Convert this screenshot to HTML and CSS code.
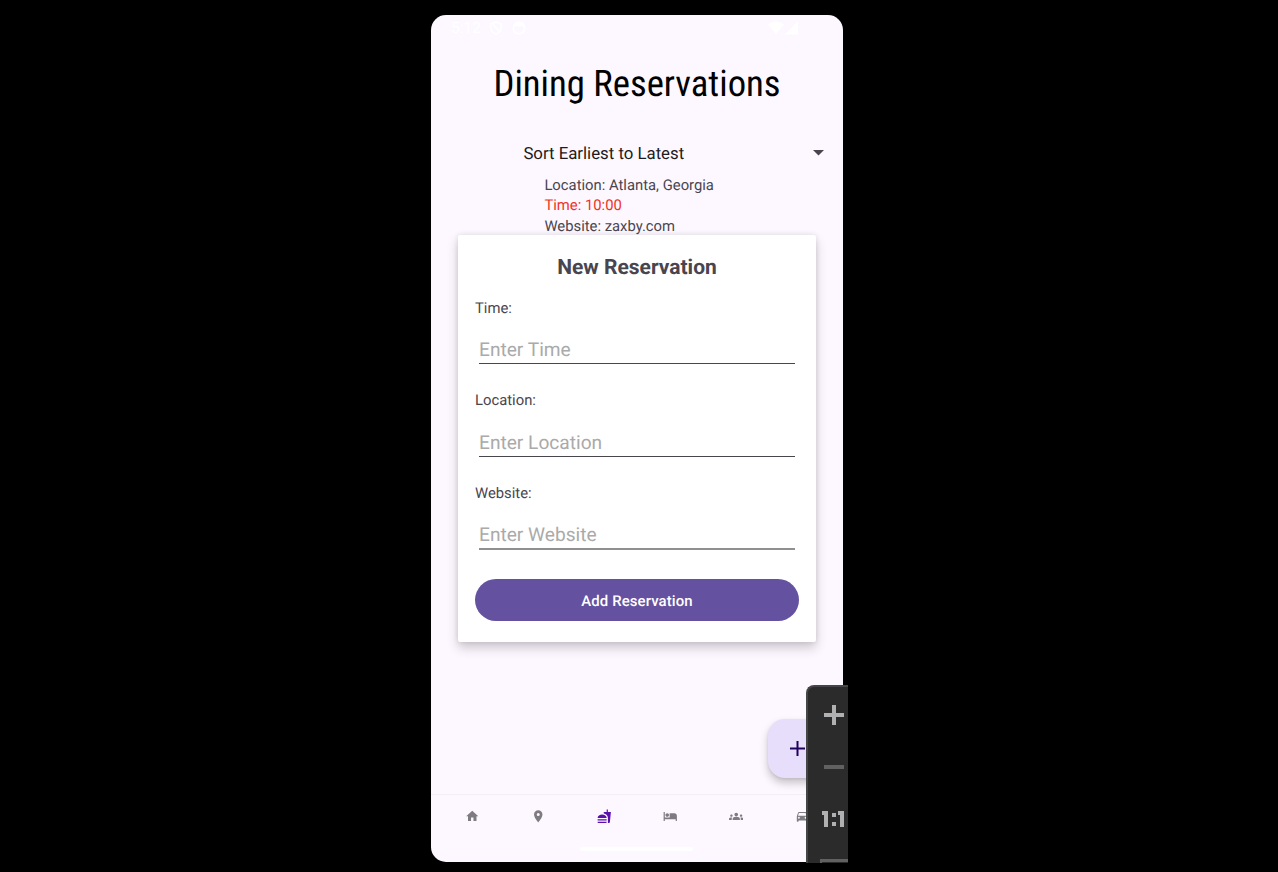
FILE: index.html
```html
<!DOCTYPE html>
<html lang="en">
<head>
<meta charset="utf-8">
<title>Dining Reservations</title>
<link rel="stylesheet" href="styles.css">
</head>
<body>
<div class="stage">
<main class="phone">
  <div class="status">
    <span class="clock">5:12</span>
    <svg class="shield" width="12" height="14" viewBox="0 0 12 14" fill="none" stroke="#fff" stroke-width="1.5"><path d="M6 1 11 2.8V7c0 3-2 5-5 6-3-1-5-3-5-6V2.800z"/><path d="M3 3.500 9 10"/></svg>
    <svg class="face" width="14" height="14" viewBox="0 0 14 14"><circle cx="7" cy="7" r="5.800" fill="none" stroke="#fff" stroke-width="1.600"/><path d="M2 6V3l3-2h5l2 2v3L9 5 7 6 5 5z" fill="#fff"/></svg>
    <svg class="signal" width="31" height="14" viewBox="0 0 31 14" fill="#fff"><path d="M0 3.500Q8-2.500 16 3.500L8 13zM30 0v13.500H17z"/></svg>
  </div>
  <h1 class="title">Dining Reservations</h1>
  <div class="sort"><span class="sort-label">Sort Earliest to Latest</span><svg width="11" height="6" viewBox="0 0 11 6"><path d="M0 0h11L5.500 5.500z" fill="#49454f"/></svg></div>
  <div class="entry">
    <div class="line place">Location: Atlanta, Georgia</div>
    <div class="line late">Time: 10:00</div>
    <div class="line">Website: zaxby.com</div>
  </div>
  <nav class="nav">
    <svg class="tab" viewBox="0 0 24 24"><path d="M10 20v-6h4v6h5v-8h3L12 3 2 12h3v8z"/></svg>
    <svg class="tab" viewBox="0 0 24 24"><path d="M12 2C8.130 2 5 5.130 5 9c0 5.250 7 13 7 13s7-7.750 7-13c0-3.870-3.130-7-7-7zm0 9.500a2.500 2.500 0 0 1 0-5 2.500 2.500 0 0 1 0 5z"/></svg>
    <svg class="tab active" viewBox="0 0 24 24"><path d="M18.060 22.990h1.660c.84 0 1.530-.64 1.630-1.460L23 5.050h-5V1h-1.970v4.050h-4.970l.3 2.340c1.710.47 3.310 1.320 4.270 2.260 1.440 1.420 2.430 2.890 2.430 5.290v8.050zM1 21.990V21h15.030v.99c0 .55-.45 1-1.010 1H2.010c-.56 0-1.010-.45-1.010-1zm15.030-7c0-8-15.030-8-15.030 0h15.030zM1.020 17h15v2h-15z"/></svg>
    <svg class="tab" viewBox="0 0 24 24"><path d="M7 13c1.660 0 3-1.340 3-3S8.660 7 7 7s-3 1.340-3 3 1.340 3 3 3zm12-6h-8v7H3V5H1v15h2v-3h18v3h2v-9c0-2.210-1.790-4-4-4z"/></svg>
    <svg class="tab" viewBox="0 0 24 24"><path d="M12 12.750c1.630 0 3.070.39 4.240.9 1.080.48 1.760 1.560 1.760 2.730V18H6v-1.610c0-1.180.68-2.260 1.760-2.730 1.170-.52 2.610-.91 4.240-.91zM4 13c1.100 0 2-.9 2-2s-.9-2-2-2-2 .9-2 2 .9 2 2 2zm1.130 1.100C4.760 14.040 4.390 14 4 14c-.99 0-1.930.21-2.780.58C.48 14.900 0 15.620 0 16.430V18h4.500v-1.610c0-.83.23-1.610.63-2.290zM20 13c1.100 0 2-.9 2-2s-.9-2-2-2-2 .9-2 2 .9 2 2 2zm4 3.430c0-.81-.48-1.530-1.220-1.850-.85-.37-1.790-.58-2.780-.58-.39 0-.76.040-1.130.1.400.68.630 1.460.630 2.290V18H24v-1.570zM12 6c1.660 0 3 1.340 3 3s-1.340 3-3 3-3-1.340-3-3 1.340-3 3-3z"/></svg>
    <svg class="tab" viewBox="0 0 24 24"><path d="M18.920 6.010C18.720 5.420 18.160 5 17.500 5h-11c-.66 0-1.210.42-1.420 1.010L3 12v8c0 .55.45 1 1 1h1c.55 0 1-.45 1-1v-1h12v1c0 .55.45 1 1 1h1c.55 0 1-.45 1-1v-8zM6.500 16a1.500 1.500 0 1 1 0-3 1.500 1.500 0 0 1 0 3zm11 0a1.500 1.500 0 1 1 0-3 1.500 1.500 0 0 1 0 3zM5 11l1.500-4.500h11L19 11z"/></svg>
  </nav>
  <div class="home-bar"></div>

  <section class="dialog">
    <h2 class="heading">New Reservation</h2>
    <div class="field"><div class="label">Time:</div><div class="input"><span>Enter Time</span></div></div>
    <div class="field"><div class="label">Location:</div><div class="input"><span>Enter Location</span></div></div>
    <div class="field"><div class="label">Website:</div><div class="input soft"><span>Enter Website</span></div></div>
    <div class="button">Add Reservation</div>
  </section>
  <div class="fab"><svg width="15" height="15" viewBox="0 0 15 15"><path d="M7.500 0v15M0 7.500h15" stroke="#21005d" stroke-width="2"/></svg></div>
</main>
<aside class="zoom-panel">
  <svg width="42" height="178" viewBox="0 0 42 178">
    <path d="M18 28h20v4H18zM26 20h4v20h-4z" fill="#b0b1b3"/>
    <path d="M18 80h20v4H18z" fill="#616161"/>
    <path d="M16 126h6v16h-4v-12h-2zM32 126h6v16h-4v-12h-2zM26 128h4v4h-4zM26 137h4v4h-4z" fill="#b0b1b3"/>
    <path d="M14 174h28v3H16v1h-2z" fill="#616161"/>
  </svg>
</aside>
</div>
</body>
</html>
```
FILE: styles.css
```css
body { margin: 0; background: #000; font-family: Roboto, "Liberation Sans", sans-serif; text-rendering: geometricPrecision; }
.stage { position: relative; width: 1278px; height: 872px; overflow: hidden; box-sizing: border-box; padding-top: 15px; }
.phone { position: relative; width: 412px; height: 847px; margin-left: 431px; border-radius: 15px; background: #fdf8ff; overflow: hidden; display: flex; flex-direction: column; color: #49454f; }
.status { height: 24px; flex: none; display: flex; align-items: center; padding: 2px 44px 0 20px; box-sizing: border-box; }
.clock { font-size: 15.5px; line-height: 20px; color: #fff; width: 40px; }
.shield { margin-left: -1px; }
.face { margin-left: 10px; }
.signal { margin-left: auto; }
.title { margin: 19px 0 0; height: 52px; line-height: 52px; text-align: center; font-family: "Roboto Condensed", Roboto, sans-serif; font-stretch: 75%; font-size: 36.700px; font-weight: 400; color: #000; white-space: nowrap; }
.sort { margin-top: 31px; height: 24px; padding: 0 19.500px 0 92.400px; display: flex; align-items: center; justify-content: space-between; color: #1d1b20; }
.sort-label { font-size: 16.800px; line-height: 26px; padding-top: 2px; }
.entry { padding: 10px 0 0 113.400px; }
.line { font-size: 14.820px; line-height: 20.300px; white-space: nowrap; }
.late { color: #f03226; }
.nav { margin-top: auto; height: 55px; border-top: 1px solid #f3eef5; display: grid; grid-template-columns: repeat(6, 66px); padding: 0 7.800px; justify-items: center; box-sizing: border-box; }
.tab { width: 14.500px; height: 14.500px; margin-top: 13.500px; fill: #7e7c80; }
.active { fill: #5b0fad; }
.home-bar { width: 113px; height: 4px; border-radius: 2px; background: #fff; margin: -2px auto 11px; position: relative; left: -1px; }
.dialog { position: absolute; left: 27px; top: 220px; width: 358px; height: 407px; box-sizing: border-box; padding: 16px 17px 21px; background: #fff; border-radius: 2px; box-shadow: 0 6px 11px rgba(50,40,50,.23), 0 0 5px rgba(50,40,50,.12); display: flex; flex-direction: column; }
.heading { margin: 0; padding-top: 1px; height: 31px; text-align: center; font-size: 21px; line-height: 32px; font-weight: 700; }
.field { height: 92.700px; padding-top: 14.700px; box-sizing: border-box; }
.label { font-size: 14.820px; line-height: 20px; }
.input { margin: 13.300px 4px 0; height: 33px; border-bottom: 1px solid #49454f; box-sizing: border-box; color: #aaa; font-size: 19.150px; line-height: 38px; }
.soft { border-bottom: 2px solid #918e94; height: 34px; }
.button { margin-top: auto; height: 42px; border-radius: 21px; background: #64519f; color: #fff; text-align: center; font-size: 14.950px; letter-spacing: .1px; font-weight: 500; line-height: 44px; }
.fab { position: absolute; left: 336.500px; top: 704px; width: 59px; height: 59px; border-radius: 17px; background: #e7defc; box-shadow: 0 5px 9px rgba(0,0,0,.22), 0 1px 3px rgba(0,0,0,.08); display: flex; align-items: center; justify-content: center; }
.zoom-panel { position: absolute; left: 806px; top: 685px; width: 42px; height: 178px; background: #2b2b2b; border: solid #454547; border-width: 2px 0 0 2px; border-radius: 8px 0 0 0; box-sizing: border-box; overflow: hidden; }
.zoom-panel svg { display: block; margin: -2px 0 0 -2px; }
```
